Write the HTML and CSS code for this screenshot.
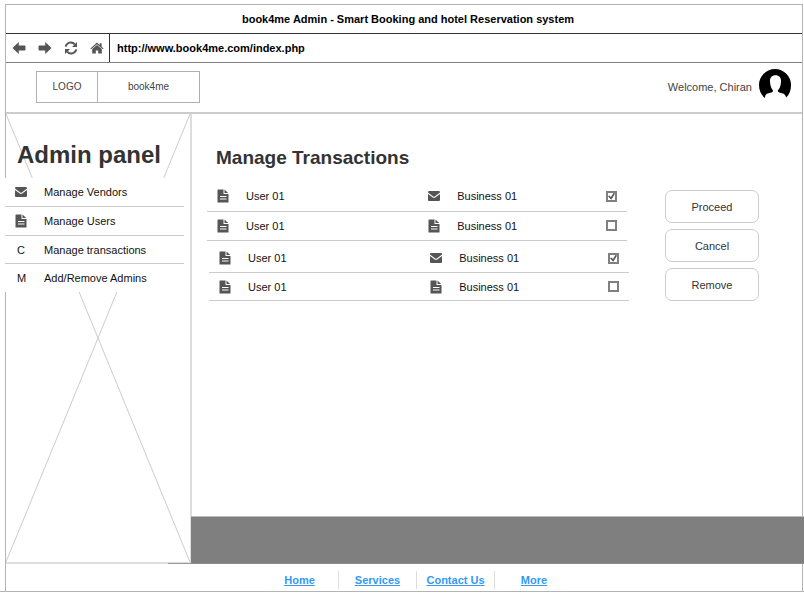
FILE: index.html
```html
<!DOCTYPE html>
<html lang="en">
<head>
<meta charset="utf-8">
<title>book4me Admin</title>
<link rel="stylesheet" href="styles.css">
</head>
<body>
<svg class="symbols" aria-hidden="true">
  <symbol id="mail" viewBox="0 0 12 10"><path d="M0 1.2Q0 0 1.2 0H10.8Q12 0 12 1.2V1.6L6.8 5.4Q6 6 5.2 5.4L0 1.6ZM0 3L4.8 6.6Q6 7.4 7.2 6.6L12 3V9Q12 10 11 10H1Q0 10 0 9Z"/></symbol>
  <symbol id="doc" viewBox="0 0 12 14"><path fill-rule="evenodd" d="M1 0.5H6.5V5H11.5V13.5H0.5V1ZM3 7V8H9.5V7ZM3 9.6V10.6H9.5V9.6ZM7.5 0.5L11.2 4H7.5Z"/></symbol>
</svg>
<div class="page">
  <div class="window">
    <div class="titlebar">book4me Admin - Smart Booking and hotel Reservation system</div>
    <div class="addressbar">
      <div class="tools">
        <button type="button" aria-label="Back"><svg viewBox="0 0 14 14"><path d="M0.5 7L6.8 1V4.4H12.5Q13.5 4.4 13.5 5.4V8.6Q13.5 9.6 12.5 9.6H6.8V13Z"/></svg></button>
        <button type="button" aria-label="Forward"><svg viewBox="0 0 14 14"><path d="M13.5 7L7.2 1V4.4H1.5Q0.5 4.4 0.5 5.4V8.6Q0.5 9.6 1.5 9.6H7.2V13Z"/></svg></button>
        <button type="button" aria-label="Reload"><svg viewBox="0 0 14 14"><path class="stroke" d="M1.7 5.6A5.2 5.2 0 0 1 10.8 3.4M12.3 8.4A5.2 5.2 0 0 1 3.2 10.6"/><path d="M13 1V6H8ZM1 13V8H6Z"/></svg></button>
        <button type="button" aria-label="Home page"><svg viewBox="0 0 14 14"><path d="M7 1.6L9.8 4.1V2.2H11.6V5.7L13.6 7.5L12.9 8.3L7 3.2L1.1 8.3L0.4 7.5ZM7 4L11.8 8.1V12.6H8.2V9.4H5.8V12.6H2.2V8.1Z"/></svg></button>
      </div>
      <input class="url" type="text" aria-label="Address" value="http://www.book4me.com/index.php">
    </div>
    <header class="header">
      <div class="brand"><span class="logo">LOGO</span><span class="name">book4me</span></div>
      <div class="user">
        <span>Welcome, Chiran</span>
        <svg class="avatar" viewBox="0 0 32 30" aria-hidden="true"><path d="M6 29C2 26 0 21 0 16A16 16 0 0 1 32 16C32 21 30.500 25.500 27.200 28.600C26.700 26 25.500 24.700 23 24.200C20.500 23.700 18.800 23.400 18.800 21.500C20 20 21.800 17.500 22 13C22.300 9 20.500 6.300 16.500 6.300C12.500 6.300 10.700 9 11 13C11.200 17.500 13 20 14 21.500C14 23.400 12 23.800 9.500 24.200C7 24.700 6 26 6 29Z"/></svg>
      </div>
    </header>
    <div class="main">
      <aside class="sidebar">
        <svg class="cross" viewBox="0 0 100 100" preserveAspectRatio="none" aria-hidden="true"><path d="M0 0L100 100M100 0L0 100"/></svg>
        <h1>Admin panel</h1>
        <nav class="menu">
          <a href="#vendors"><span class="mark"><svg class="mail"><use href="#mail"/></svg></span>Manage Vendors</a>
          <a href="#users"><span class="mark"><svg class="doc"><use href="#doc"/></svg></span>Manage Users</a>
          <a href="#transactions"><span class="mark">C</span>Manage transactions</a>
          <a href="#admins"><span class="mark">M</span>Add/Remove Admins</a>
        </nav>
      </aside>
      <div class="body">
        <main class="content">
          <h2>Manage Transactions</h2>
          <div class="columns">
            <div class="lists">
              <table>
                <tr><td class="icon"><svg class="doc"><use href="#doc"/></svg></td><td class="person">User 01</td><td class="icon"><svg class="mail"><use href="#mail"/></svg></td><td class="firm">Business 01</td><td class="pick"><input type="checkbox" aria-label="Select transaction 1" checked></td></tr>
                <tr><td class="icon"><svg class="doc"><use href="#doc"/></svg></td><td class="person">User 01</td><td class="icon"><svg class="doc"><use href="#doc"/></svg></td><td class="firm">Business 01</td><td class="pick"><input type="checkbox" aria-label="Select transaction 2"></td></tr>
              </table>
              <table class="second">
                <tr><td class="icon"><svg class="doc"><use href="#doc"/></svg></td><td class="person">User 01</td><td class="icon"><svg class="mail"><use href="#mail"/></svg></td><td class="firm">Business 01</td><td class="pick"><input type="checkbox" aria-label="Select transaction 3" checked></td></tr>
                <tr><td class="icon"><svg class="doc"><use href="#doc"/></svg></td><td class="person">User 01</td><td class="icon"><svg class="doc"><use href="#doc"/></svg></td><td class="firm">Business 01</td><td class="pick"><input type="checkbox" aria-label="Select transaction 4"></td></tr>
              </table>
            </div>
            <div class="actions">
              <button type="button">Proceed</button>
              <button type="button">Cancel</button>
              <button type="button">Remove</button>
            </div>
          </div>
        </main>
        <div class="band"></div>
      </div>
    </div>
    <footer class="footer">
      <a href="#home"><span>Home</span></a>
      <a href="#services"><span>Services</span></a>
      <a href="#contact"><span>Contact Us</span></a>
      <a href="#more"><span>More</span></a>
    </footer>
  </div>
</div>
</body>
</html>
```
FILE: styles.css
```css
* { box-sizing: border-box; }

body {
  margin: 0;
  min-height: 100vh;
  padding: 4px 0 7px;
  display: flex;
  flex-direction: column;
  background: #fff;
  color: #111;
  font: 11px/16px "Liberation Sans", Arial, sans-serif;
  overflow-x: hidden;
}

button, input { font: inherit; color: inherit; }

svg { display: block; fill: #555; }
.symbols { position: absolute; width: 0; height: 0; }
.mail { width: 12px; height: 10px; }
.doc { width: 12px; height: 14px; }

.page {
  flex: 1;
  display: flex;
  flex-direction: column;
  border-bottom: 1px solid #b4b4b4;
}

.window {
  flex: 1;
  display: flex;
  flex-direction: column;
  margin: 0 1px 0 5px;
  border: 1px solid #b4b4b4;
  border-bottom: 0;
}

.titlebar {
  padding: 6px 0 6px 8px;
  border-bottom: 1px solid #333;
  text-align: center;
  font-weight: bold;
  color: #000;
}

.addressbar {
  display: flex;
  height: 29px;
  border-bottom: 1px solid #808080;
}

.tools {
  display: flex;
  align-items: center;
  gap: 12px;
  padding: 0 5px 0 6px;
  border-right: 1px solid #333;
}

.tools button {
  width: 14px;
  height: 14px;
  padding: 0;
  border: 0;
  background: none;
}

.tools svg { width: 14px; height: 14px; }
.tools .stroke { fill: none; stroke: #555; stroke-width: 2; }

.url {
  flex: 1;
  min-width: 0;
  padding: 0 7px;
  border: 0;
  background: none;
  font-weight: bold;
  color: #000;
}

.header {
  display: flex;
  justify-content: space-between;
  align-items: center;
  height: 51px;
  padding: 0 11px 2px 30px;
  border-bottom: 2px solid #ccc;
}

.brand {
  display: flex;
  border: 1px solid #b0b0b0;
  font-size: 10px;
  line-height: 30px;
  color: #444;
  text-align: center;
}

.logo { width: 61px; border-right: 1px solid #b0b0b0; }
.name { width: 101px; }

.user { display: flex; align-items: center; gap: 7px; color: #444; }
.avatar { width: 32px; height: 30px; margin-bottom: 6px; fill: #000; }

.main {
  flex: 1;
  display: grid;
  grid-template-columns: 186px 1fr;
}

.sidebar {
  position: relative;
  border-right: 2px solid #ddd;
  border-bottom: 2px solid #ddd;
}

.cross { position: absolute; inset: 0; width: 100%; height: 100%; }
.cross path { stroke: #ccc; stroke-width: 1; vector-effect: non-scaling-stroke; }

h1, h2 { margin: 0; color: #333; }
h1 { position: relative; padding: 27px 11px 9px; font-size: 24px; line-height: 28px; }
h2 { padding: 32px 0 12px 9px; font-size: 19px; line-height: 24px; }

.menu { position: relative; margin: 0 6px 0 -1px; background: #fff; }

.menu a {
  display: flex;
  align-items: center;
  height: 29px;
  border-bottom: 1px solid #ccc;
  color: #111;
  text-decoration: none;
}

.menu a:nth-child(n+3) { height: 28px; }
.menu a:last-child { border-color: #fff; }
.mark { width: 39px; padding-left: 10px; }
.mark:not(:has(svg)) { padding-left: 12px; }

.body { display: flex; flex-direction: column; min-width: 0; }
.content { flex: 1; padding: 0 43px 24px 15px; }
.columns { display: flex; gap: 36px; }
.lists { flex: 1; }

table { width: calc(100% - 2px); border-collapse: collapse; table-layout: fixed; }
.second { margin: 4px 0 0 2px; }
td { height: 29px; padding: 0; border-bottom: 1px solid #ccc; }
.second td { height: 28px; }
.icon { width: 39px; padding-left: 10px; }
.person { width: 41%; }
.pick { width: 21px; }

input[type="checkbox"] {
  appearance: none;
  display: block;
  width: 11px;
  height: 11px;
  margin: 0;
  border: 2px solid #808080;
}

input[type="checkbox"]:checked::before {
  content: "";
  display: block;
  width: 7px;
  height: 7px;
  background: #555;
  clip-path: polygon(0 50%, 18% 38%, 42% 62%, 82% 0, 100% 14%, 46% 100%);
}

.actions { display: flex; flex-direction: column; gap: 6px; padding-top: 8px; }

.actions button {
  width: 94px;
  height: 33px;
  border: 1px solid #ccc;
  border-radius: 7px;
  background: #fff;
  color: #333;
}

.band {
  position: relative;
  height: 48px;
  margin: 0 -2px 0 -1px;
  border-top: 1px solid #bbb;
  border-bottom: 1px solid #8c8c8c;
  background: #7f7f7f;
}

.band::before {
  content: "";
  position: absolute;
  right: 100%;
  bottom: -1px;
  width: 23px;
  height: 1px;
  background: #999;
}

.footer {
  display: flex;
  justify-content: center;
  padding: 7px 0 2px 26px;
}

.footer a {
  width: 78px;
  line-height: 18px;
  border-right: 1px solid #ddd;
  text-align: center;
  font-weight: bold;
  color: #3399f3;
  text-decoration: none;
}

.footer a:last-child { border: 0; }
.footer span { text-decoration: underline; }
```
